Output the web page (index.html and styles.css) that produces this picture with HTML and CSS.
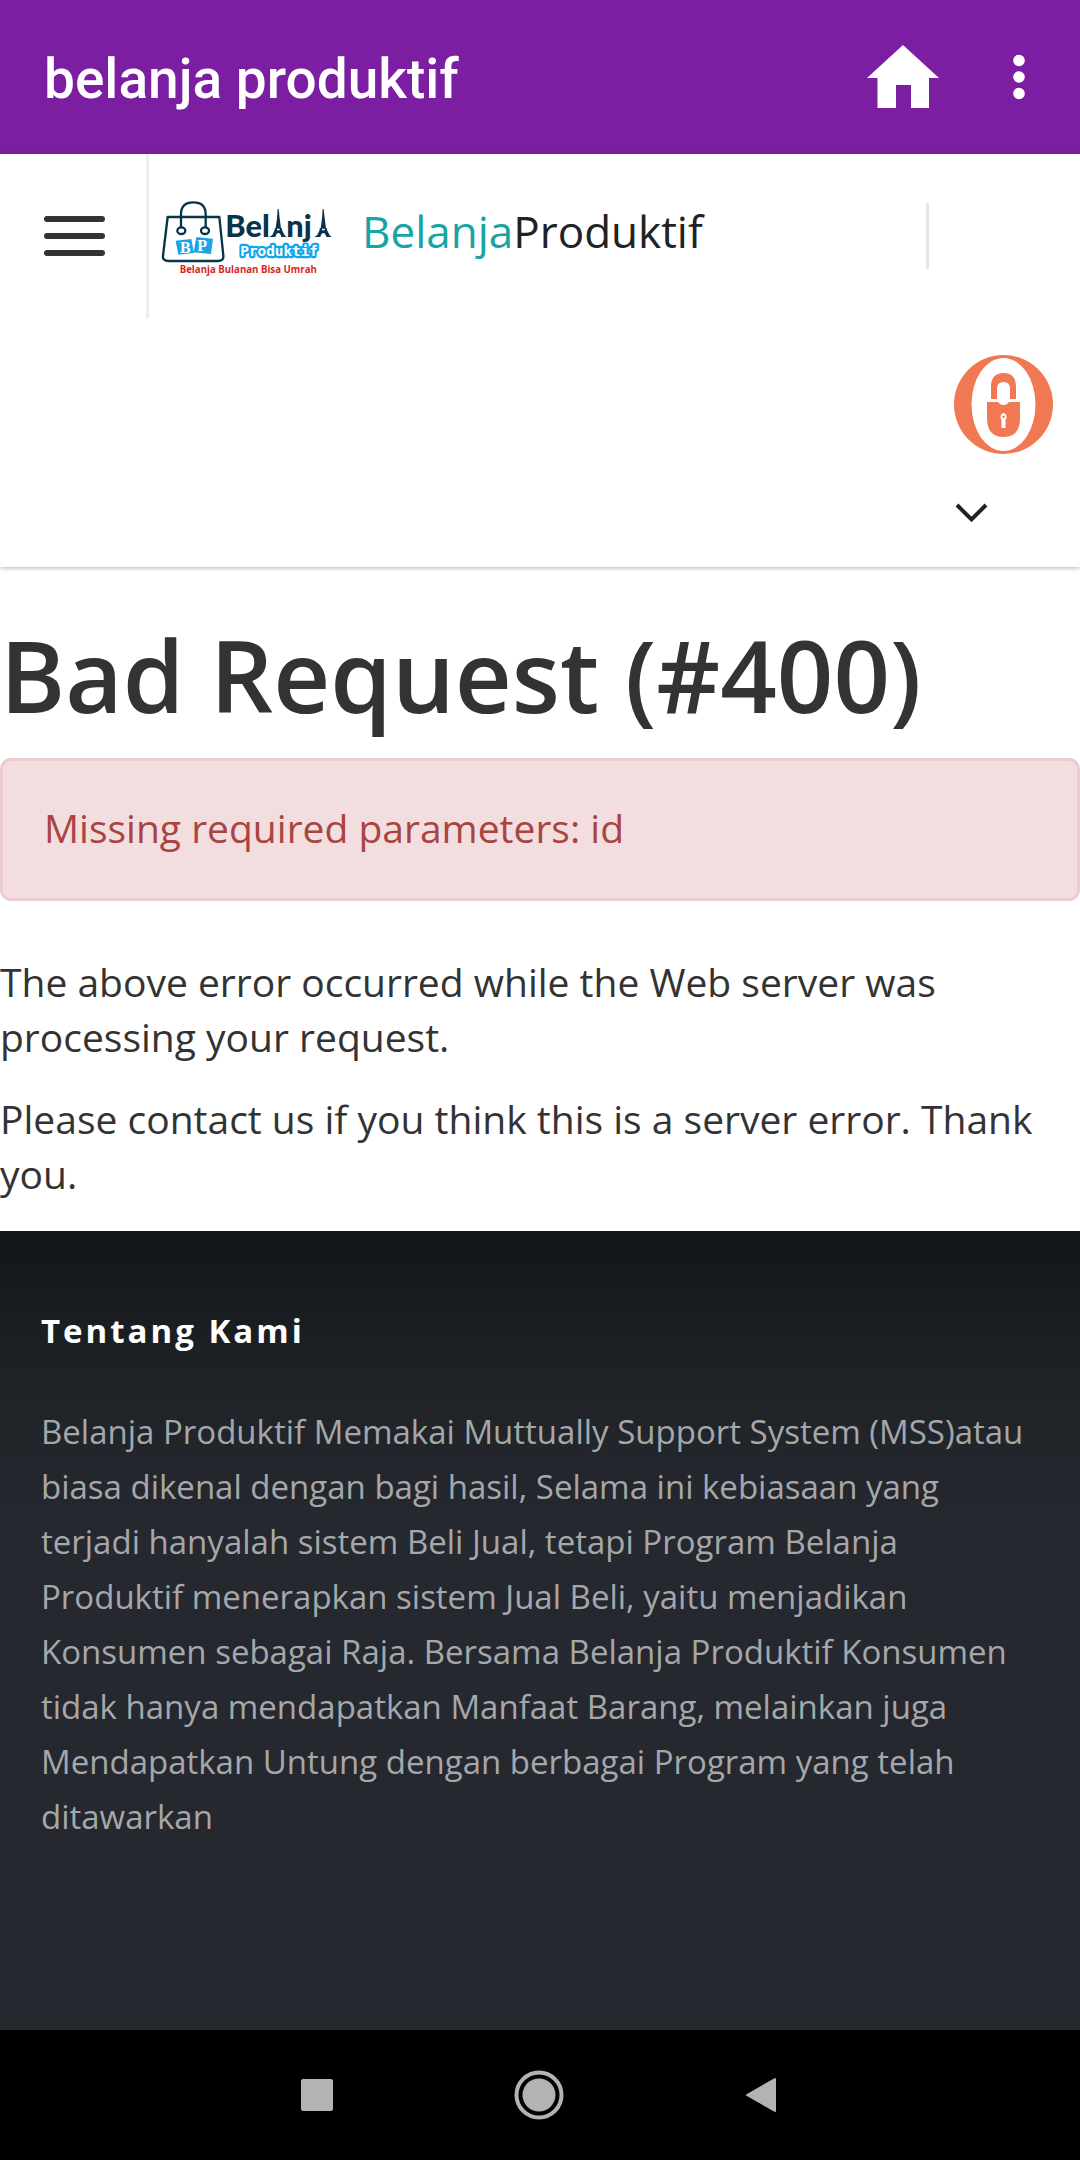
FILE: index.html
```html
<!DOCTYPE html>
<html lang="id">
<head>
<meta charset="utf-8">
<meta name="viewport" content="width=device-width, initial-scale=1">
<title>belanja produktif</title>
<link rel="stylesheet" href="styles.css">
</head>
<body>
<div class="appbar">
  <div class="appbar-title">belanja produktif</div>
  <button class="appbar-button" type="button" aria-label="Home">
    <svg width="72" height="64" viewBox="0 0 72 64" fill="#fff"><path d="M36 0 72 33H62V63H44V40H29V63H10.500V33H0Z"/></svg>
  </button>
  <button class="appbar-button" type="button" aria-label="More options">
    <svg width="12" height="46" viewBox="0 0 12 46" fill="#fff"><circle cx="6" cy="6.500" r="5.800"/><circle cx="6" cy="23" r="5.800"/><circle cx="6" cy="39.500" r="5.800"/></svg>
  </button>
</div>

<header class="site-header">
  <div class="header-row">
    <button class="menu-button" type="button" aria-label="Menu">
      <span class="menu-line"></span><span class="menu-line"></span><span class="menu-line"></span>
    </button>
    <a class="brand" href="#">
      <svg class="logo" width="190" height="90" viewBox="0 0 570 270" role="img" aria-label="Belanja Produktif">
        <g fill="none" stroke="#07344a" stroke-width="7" stroke-linejoin="round">
          <path d="M53 78H208L220 194Q222 210 203 210H56Q37 210 39 194Z"/>
          <path d="M93 108V70Q93 34 130 34Q167 34 167 70V108"/>
          <ellipse cx="94" cy="119" rx="12" ry="10"/><ellipse cx="165" cy="119" rx="12" ry="10"/>
        </g>
        <path fill="#1ba4e8" d="M77 149 124 144 132 186 85 191ZM139 138 189 143 183 189 131 184Z"/>
        <g class="logo-initials"><text x="90" y="185">B</text><text x="142" y="180">P</text></g>
        <g class="logo-name"><text x="226" y="137">Bel</text><text x="409" y="137">nj</text></g>
        <g fill="#07344a">
          <path d="M383 54H386L389 82 393 112H396V117L404 133 410 138H394Q391 126 385 126Q379 126 376 138H358L367 132 374 117V112H377L381 82Z"/>
          <path d="M518 54H521L524 82 528 112H531V117L539 133 545 138H529Q526 126 520 126Q514 126 511 138H493L502 132 509 117V112H512L516 82Z"/>
        </g>
        <path fill="#fff" d="M381 113H389V118H381ZM516 113H524V118H516Z"/>
        <text class="logo-sub" x="271" y="195">Produktif</text>
        <text class="logo-tagline" x="89" y="245">Belanja Bulanan Bisa Umrah</text>
      </svg>
      <span class="brand-name"><span class="brand-accent">Belanja</span>Produktif</span>
    </a>
    <span class="header-divider"></span>
  </div>
  <div class="header-tools">
    <a class="login" href="#" aria-label="Login">
      <svg width="99" height="99" viewBox="0 0 99 99">
        <circle cx="49.500" cy="49.500" r="49.500" fill="#f07853"/>
        <ellipse cx="49.500" cy="49.500" rx="32" ry="46.500" fill="#fff"/>
        <g fill="#f07853">
          <path d="M37 44V32Q37 18 49.500 18Q62 18 62 32V44H56V34Q56 27 49.500 27Q43 27 43 34V44Z"/>
          <path d="M33 47H44Q46 50 49.500 50Q53 50 55 47H66V63Q66 82 49.500 82Q33 82 33 63Z"/>
        </g>
        <path fill="#fff" d="M49.500 58A3 4 0 0 1 51.500 65V73H47.500V65A3 4 0 0 1 49.500 58Z"/>
        <circle cx="49.500" cy="62" r="1.200" fill="#f07853"/>
      </svg>
    </a>
    <button class="expand" type="button" aria-label="Expand">
      <svg width="34" height="20" viewBox="0 0 34 20" fill="none" stroke="#222" stroke-width="4"><path d="M3 2 17.500 16.500 32 2"/></svg>
    </button>
  </div>
</header>

<main class="error-page">
  <h1>Bad Request (#400)</h1>
  <div class="alert" role="alert">Missing required parameters: id</div>
  <p>The above error occurred while the Web server was processing your request.</p>
  <p>Please contact us if you think this is a server error. Thank you.</p>
</main>

<footer class="site-footer">
  <h2>Tentang Kami</h2>
  <p>Belanja Produktif Memakai Muttually Support System (MSS)atau biasa dikenal dengan bagi hasil, Selama ini kebiasaan yang terjadi hanyalah sistem Beli Jual, tetapi Program Belanja Produktif menerapkan sistem Jual Beli, yaitu menjadikan Konsumen sebagai Raja. Bersama Belanja Produktif Konsumen tidak hanya mendapatkan Manfaat Barang, melainkan juga Mendapatkan Untung dengan berbagai Program yang telah ditawarkan</p>
</footer>

<nav class="system-nav" aria-label="System">
  <button type="button" aria-label="Recent apps"><svg width="32" height="32" viewBox="0 0 32 32"><rect width="32" height="32" rx="2" fill="#b3b3b3"/></svg></button>
  <button type="button" aria-label="Home screen"><svg width="50" height="50" viewBox="0 0 50 50"><circle cx="25" cy="25" r="22.500" fill="none" stroke="#b3b3b3" stroke-width="4"/><circle cx="25" cy="25" r="16.500" fill="#b3b3b3"/></svg></button>
  <button type="button" aria-label="Back"><svg width="32" height="36" viewBox="0 0 32 36"><path d="M2 18 30 2V34Z" fill="#b3b3b3" stroke="#b3b3b3" stroke-width="2" stroke-linejoin="round"/></svg></button>
</nav>
</body>
</html>
```

FILE: styles.css
```css
* {
  box-sizing: border-box;
}

body {
  margin: 0;
  min-height: 100vh;
  display: flex;
  flex-direction: column;
  background: #fff;
  color: #333;
  font-family: "Open Sans", sans-serif;
  font-size: 39px;
  line-height: 55px;
}

button {
  padding: 0;
  border: 0;
  background: none;
  color: inherit;
  font: inherit;
}

svg {
  display: block;
}

a {
  color: inherit;
  text-decoration: none;
}

.appbar {
  display: flex;
  align-items: center;
  gap: 74px;
  height: 154px;
  padding: 0 55px 0 44px;
  background: #7b1ea2;
  color: #fff;
}

.appbar-title {
  flex: 1;
  padding-top: 5px;
  font-family: Roboto, sans-serif;
  font-size: 55px;
  font-weight: 500;
}

.site-header {
  height: 413px;
  box-shadow: 0 1px 4px rgba(0, 0, 0, 0.3);
}

.header-row {
  display: flex;
  align-items: center;
  height: 164px;
}

.menu-button {
  align-self: stretch;
  display: flex;
  flex-direction: column;
  justify-content: center;
  gap: 11px;
  padding: 0 41px 0 44px;
  border-right: 3px solid #eee;
}

.menu-line {
  width: 61px;
  height: 6px;
  border-radius: 3px;
  background: #333;
}

.brand {
  display: flex;
  align-items: center;
  gap: 22px;
  padding-left: 1px;
}

.brand-name {
  padding-bottom: 10px;
  font-size: 44px;
  color: #222;
}

.brand-accent {
  color: #17a4a5;
}

.logo-initials {
  fill: #fff;
  font: 700 48px "Liberation Serif", serif;
}

.logo-name {
  fill: #07344a;
  font: 900 92px Lato, sans-serif;
}

.logo-sub {
  fill: #fff;
  stroke: #12a5ee;
  stroke-width: 13px;
  stroke-linejoin: round;
  paint-order: stroke;
  font: 700 43px "DejaVu Sans Mono", monospace;
}

.logo-tagline {
  fill: #e01f26;
  font: 700 29px "Open Sans", sans-serif;
}

.header-divider {
  width: 3px;
  height: 66px;
  margin: 0 151px 0 auto;
  background: #e5e5e5;
}

.header-tools {
  display: flex;
  flex-direction: column;
  align-items: flex-start;
  gap: 49px;
  width: 126px;
  margin-left: auto;
  padding-top: 37px;
}

.error-page {
  padding-bottom: 3px;
}

.error-page h1 {
  margin: 0;
  padding: 53px 0 29px;
  font-size: 99px;
  font-weight: 600;
  line-height: 109px;
}

.alert {
  margin-bottom: 53px;
  padding: 39px 41px 43px;
  border: 3px solid #ebccd1;
  border-radius: 11px;
  background: #f2dede;
  color: #a94442;
}

.error-page p {
  margin: 0 0 27px;
}

.site-footer {
  flex: 1;
  padding: 72px 41px;
  background: linear-gradient(#121619, #1f2327 150px, #25282f 290px);
}

.site-footer h2 {
  margin: 0 0 46px;
  color: #fff;
  font-size: 33px;
  font-weight: 700;
  letter-spacing: 3px;
  line-height: 55px;
}

.site-footer p {
  margin: 0;
  color: #a5a7aa;
  font-size: 33px;
}

.system-nav {
  display: grid;
  grid-template-columns: repeat(3, 222px);
  justify-content: center;
  height: 130px;
  padding-right: 2px;
  background: #000;
}

.system-nav button {
  display: flex;
  align-items: center;
  justify-content: center;
}
```
